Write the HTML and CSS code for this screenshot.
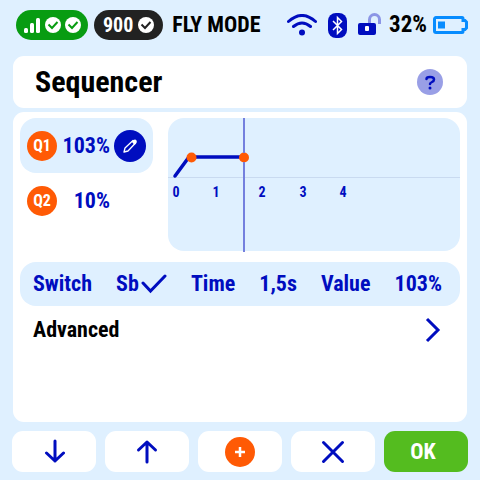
FILE: index.html
```html
<!DOCTYPE html>
<html lang="en">
<head>
    <meta charset="UTF-8"/>
    <meta content="width=device-width, initial-scale=1.0" name="viewport"/>
    <title>Sequencer</title>
    <link rel="stylesheet" href="styles.css">
</head>
<body>
<header class="status-bar">
    <div class="pill signal-pill">
        <svg width="17" height="16" viewBox="0 0 17 16" fill="#fff">
            <rect y="11" width="4" height="5" rx="1.5"/>
            <rect x="6" y="6" width="4" height="10" rx="1.5"/>
            <rect x="12" y="1" width="4" height="15" rx="1.5"/>
        </svg>
        <svg width="16" height="16" viewBox="0 0 16 16">
            <circle cx="8" cy="8" r="8" fill="#fff"/>
            <path d="M3.5 7.5l3.5 3.5 5.5-6" fill="none" stroke="#089c12" stroke-width="2"/>
        </svg>
        <svg width="16" height="16" viewBox="0 0 16 16">
            <circle cx="8" cy="8" r="8" fill="#fff"/>
            <path d="M3.5 7.5l3.5 3.5 5.5-6" fill="none" stroke="#089c12" stroke-width="2"/>
        </svg>
    </div>
    <div class="pill module-pill">
        <span>900</span>
        <svg width="16" height="16" viewBox="0 0 16 16">
            <circle cx="8" cy="8" r="8" fill="#fff"/>
            <path d="M3.5 7.5l3.5 3.5 5.5-6" fill="none" stroke="#222" stroke-width="2"/>
        </svg>
    </div>
    <span class="mode">FLY MODE</span>
    <div class="status-icons">
        <svg width="30" height="22" viewBox="0 0 30 22" fill="none" stroke="#000dbf" stroke-width="3" stroke-linecap="round">
            <path d="M1.5 7.5Q15-4.5 28.5 7.5M6.5 12.5q8.5-7 17 0"/>
            <circle cx="15" cy="18.5" r="3" fill="#000dbf" stroke="none"/>
        </svg>
        <svg width="19" height="25" viewBox="0 0 19 25">
            <rect width="19" height="25" rx="8" fill="#000dbf"/>
            <path d="M5 8l8.5 8.5-4 4v-16l4 4L5 17" fill="none" stroke="#fff" stroke-width="1.5"/>
        </svg>
        <svg width="23" height="24" viewBox="0 0 23 24">
            <path d="M11.500 11V6.500a5 5 0 0 1 10 0V11" fill="none" stroke="#8b95e6" stroke-width="3"/>
            <rect y="10" width="18" height="12" rx="2" fill="#000dbf"/>
            <rect x="7" y="13" width="4" height="5" rx="1" fill="#fff"/>
        </svg>
    </div>
    <span class="battery-level">32%</span>
    <svg width="35" height="18" viewBox="0 0 35 18">
        <path d="M3 1.5h26a1 1 0 0 1 1 1v2h2L33.5 6v6L32 13.5h-2v2a1 1 0 0 1-1 1H3A1.5 1.5 0 0 1 1.5 15V3A1.5 1.5 0 0 1 3 1.5z" fill="none" stroke="#078cff" stroke-width="3"/>
        <rect x="5" y="5.5" width="7" height="7" fill="#078cff"/>
    </svg>
</header>

<section class="card title-card">
    <h1>Sequencer</h1>
    <button class="help-button" aria-label="Help">
        <svg width="26" height="26" viewBox="0 0 26 26" fill="none" stroke="#000dbf" stroke-width="2.5" stroke-linecap="round">
            <path d="M9.500 10Q9.500 8 13 8q4 0 4 2.500 0 1.500-2 2.500t-2 2"/>
            <circle cx="13" cy="19" r="1.5" fill="#000dbf" stroke="none"/>
        </svg>
    </button>
</section>

<main class="card content">
    <div class="editor">
        <div class="points">
            <div class="point selected">
                <span class="badge">Q1</span>
                <span class="point-value">103%</span>
                <button class="edit-button" aria-label="Edit Q1">
                    <svg width="16" height="16" viewBox="0 0 16 16" fill="none" stroke="#fff" stroke-width="1.3" stroke-linejoin="round">
                        <path d="M2 14l1-4 8-7.500 2.500 2.500L6 13z"/>
                        <path d="M9.500 3.500L11.500 2q2-1 3 .5t-.5 3L12.500 7z" fill="#fff" stroke="none"/>
                    </svg>
                </button>
            </div>
            <div class="point">
                <span class="badge">Q2</span>
                <span class="point-value">10%</span>
            </div>
        </div>
        <div class="chart">
            <svg width="100%" height="134">
                <path d="M0 59.5h1000" stroke="#c9daf0" stroke-width="1"/>
                <path d="M7 58L21 39H76" fill="none" stroke="#000dbf" stroke-width="3.5" stroke-linecap="round"/>
                <circle cx="23.5" cy="39.5" r="5" fill="#ff5a05"/>
                <circle cx="76" cy="39.5" r="5" fill="#ff5a05"/>
                <path d="M76 0v35M76 44v90" stroke="#7480de" stroke-width="2"/>
                <g class="axis-labels">
                    <text x="8" y="79">0</text>
                    <text x="48" y="79">1</text>
                    <text x="94" y="79">2</text>
                    <text x="135" y="79">3</text>
                    <text x="175" y="79">4</text>
                </g>
            </svg>
        </div>
    </div>

    <div class="params">
        <span id="switch-label">Switch</span>
        <button class="param-button" aria-labelledby="switch-label">Sb
            <svg width="26" height="20" viewBox="0 0 26 20" fill="none" stroke="#000dbf" stroke-width="3" stroke-linecap="round">
                <path d="M2 9l7.5 8L24 2"/>
            </svg>
        </button>
        <span id="time-label">Time</span>
        <button class="param-button" aria-labelledby="time-label">1,5s</button>
        <span id="value-label">Value</span>
        <button class="param-button" aria-labelledby="value-label">103%</button>
    </div>

    <a class="advanced" href="#">
        <span>Advanced</span>
        <svg width="16" height="26" viewBox="0 0 16 26" fill="none" stroke="#000dbf" stroke-width="3">
            <path d="M2 2l11 11L2 24"/>
        </svg>
    </a>
</main>

<footer class="toolbar">
    <button aria-label="Down">
        <svg width="22" height="26" viewBox="0 0 22 26" fill="none" stroke="#000dbf" stroke-width="3" stroke-linecap="round" stroke-linejoin="round">
            <path d="M12 2v20M3.5 14l8.500 8 8.500-8"/>
        </svg>
    </button>
    <button aria-label="Up">
        <svg width="22" height="26" viewBox="0 0 22 26" fill="none" stroke="#000dbf" stroke-width="3" stroke-linecap="round" stroke-linejoin="round">
            <path d="M11 23V3M2.5 11L11 3l8.500 8"/>
        </svg>
    </button>
    <button aria-label="Add">
        <svg width="30" height="30" viewBox="0 0 30 30">
            <circle cx="15" cy="15" r="15" fill="#ff5a05"/>
            <path d="M10 15h10M15 10v10" stroke="#fff" stroke-width="2.5"/>
        </svg>
    </button>
    <button aria-label="Cancel">
        <svg width="24" height="24" viewBox="0 0 24 24" stroke="#000dbf" stroke-width="3" stroke-linecap="round">
            <path d="M2.5 2.5l19 19M21.5 2.5l-19 19"/>
        </svg>
    </button>
    <button class="ok-button">OK</button>
</footer>
</body>
</html>
```

FILE: styles.css
```css
* {
    box-sizing: border-box;
}

body {
    margin: 0;
    padding: 0 12px 8px;
    min-height: 100vh;
    display: flex;
    flex-direction: column;
    background-color: #dff0ff;
    color: #000;
    font-family: "Roboto Condensed", "Liberation Sans Narrow", Roboto, sans-serif;
    font-size: 22px;
    font-weight: bold;
    line-height: 26px;
}

svg {
    display: block;
    flex: none;
}

button {
    margin: 0;
    padding: 0;
    border: none;
    background: none;
    color: inherit;
    font: inherit;
    cursor: pointer;
}

/* Status bar */
.status-bar {
    display: flex;
    align-items: center;
    height: 50px;
    margin-bottom: 6px;
    padding-left: 4px;
    white-space: nowrap;
}

.pill {
    display: flex;
    align-items: center;
    height: 30px;
    border-radius: 15px;
    color: #fff;
    font-size: 20px;
}

.signal-pill {
    gap: 4px;
    padding: 0 7px 0 8px;
    margin-right: 6px;
    background-color: #089c12;
}

.module-pill {
    gap: 5px;
    padding: 0 9px;
    margin-right: 9px;
    background-color: #222;
}

.status-icons {
    display: flex;
    align-items: center;
    gap: 11px;
    margin-left: auto;
    margin-right: 8px;
}

.battery-level {
    margin-right: 6px;
    font-size: 23px;
}

/* Cards */
.card {
    margin: 0 1px;
    border-radius: 11px;
    background-color: #fff;
}

.title-card {
    display: flex;
    align-items: center;
    justify-content: space-between;
    height: 52px;
    margin-bottom: 4px;
    padding: 0 24px 0 22px;
}

h1 {
    margin: 0;
    font-size: 30px;
    line-height: 36px;
}

.help-button {
    border-radius: 50%;
    background-color: #999fe6;
}

.content {
    flex: 1;
    padding: 6px 7px;
    margin-bottom: 9px;
}

/* Point list and chart */
.editor {
    display: flex;
    gap: 15px;
    margin-bottom: 11px;
    color: #000dbf;
}

.points {
    width: 133px;
    flex: none;
}

.point {
    display: grid;
    grid-template-columns: 30px 49px 32px;
    gap: 4px;
    align-items: center;
    height: 55px;
    padding-left: 7px;
    border-radius: 16px;
}

.point.selected {
    background-color: #dff0ff;
}

.badge {
    height: 30px;
    border-radius: 50%;
    background-color: #ff5a05;
    color: #fff;
    font-size: 16px;
    line-height: 30px;
    text-align: center;
}

.point-value {
    text-align: right;
}

.edit-button {
    display: grid;
    place-items: center;
    height: 32px;
    border-radius: 50%;
    background-color: #000dbf;
}

.chart {
    flex: 1;
    height: 133px;
    border-radius: 16px;
    background-color: #dff0ff;
}

.axis-labels {
    fill: #000dbf;
    font-size: 14px;
    text-anchor: middle;
}

/* Parameters of the selected point */
.params {
    display: flex;
    align-items: center;
    justify-content: space-between;
    height: 44px;
    padding: 0 18px 0 13px;
    border-radius: 16px;
    background-color: #dff0ff;
    color: #000dbf;
    white-space: nowrap;
}

.param-button {
    display: flex;
    align-items: center;
    gap: 2px;
}

.advanced {
    display: flex;
    align-items: center;
    justify-content: space-between;
    height: 48px;
    padding: 0 19px 0 13px;
    color: #000;
    text-decoration: none;
}

/* Bottom buttons */
.toolbar {
    display: grid;
    grid-template-columns: repeat(5, 1fr);
    gap: 9px;
}

.toolbar button {
    display: grid;
    place-items: center;
    height: 41px;
    border-radius: 11px;
    background-color: #fff;
}

.toolbar .ok-button {
    padding-right: 6px;
    background-color: #54bc1f;
    color: #fff;
}
```
